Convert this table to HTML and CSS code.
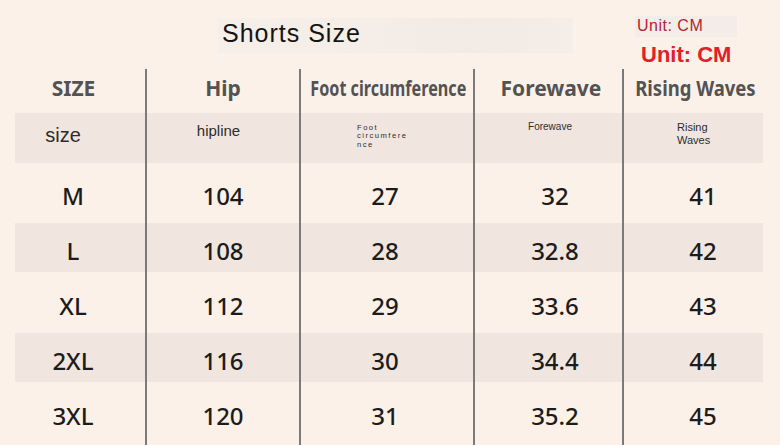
FILE: index.html
```html
<!DOCTYPE html>
<html lang="en">
<head>
<meta charset="utf-8">
<title>Shorts Size</title>
<link rel="stylesheet" href="styles.css">
</head>
<body>
<div class="page">
  <div class="top">
    <div class="title-box"><span class="title">Shorts Size</span></div>
    <div class="units">
      <div class="unit-small">Unit: CM</div>
      <div class="unit-big">Unit: CM</div>
    </div>
  </div>

  <div class="table">
    <div class="row head">
      <div class="cell c1"><span class="h">SIZE</span></div>
      <div class="cell c2"><span class="h">Hip</span></div>
      <div class="cell c3"><span class="h cond">Foot circumference</span></div>
      <div class="cell c4"><span class="h">Forewave</span></div>
      <div class="cell c5"><span class="h cond2">Rising Waves</span></div>
    </div>
    <div class="row sub">
      <div class="cell c1"><span class="s-size">size</span></div>
      <div class="cell c2"><span class="s-hip">hipline</span></div>
      <div class="cell c3"><span class="s-foot">Foot<br>circumfere<br>nce</span></div>
      <div class="cell c4"><span class="s-fore">Forewave</span></div>
      <div class="cell c5"><span class="s-rise">Rising<br>Waves</span></div>
    </div>
    <div class="row data">
      <div class="cell c1">M</div><div class="cell c2">104</div><div class="cell c3">27</div><div class="cell c4">32</div><div class="cell c5">41</div>
    </div>
    <div class="row data shade">
      <div class="cell c1">L</div><div class="cell c2">108</div><div class="cell c3">28</div><div class="cell c4">32.8</div><div class="cell c5">42</div>
    </div>
    <div class="row data">
      <div class="cell c1">XL</div><div class="cell c2">112</div><div class="cell c3">29</div><div class="cell c4">33.6</div><div class="cell c5">43</div>
    </div>
    <div class="row data shade">
      <div class="cell c1">2XL</div><div class="cell c2">116</div><div class="cell c3">30</div><div class="cell c4">34.4</div><div class="cell c5">44</div>
    </div>
    <div class="row data">
      <div class="cell c1">3XL</div><div class="cell c2">120</div><div class="cell c3">31</div><div class="cell c4">35.2</div><div class="cell c5">45</div>
    </div>
    <div class="row filler">
      <div class="cell c1"></div><div class="cell c2"></div><div class="cell c3"></div><div class="cell c4"></div><div class="cell c5"></div>
    </div>
  </div>
</div>
</body>
</html>
```

FILE: styles.css
```css
html, body {
  margin: 0;
  padding: 0;
  overflow: hidden;
  background: #fcf1e8;
}
.page {
  width: 780px;
  height: 445px;
  background: #fcf1e8;
  font-family: "Liberation Sans", Arial, sans-serif;
}
.top {
  height: 58px;
  display: flex;
  align-items: flex-start;
  padding-left: 218px;
}
.title-box {
  margin-top: 18px;
  width: 355px;
  height: 35px;
  box-sizing: border-box;
  padding: 0 0 4px 4px;
  background: linear-gradient(to right, #f6eee8 0%, #f5ede7 45%, #f2eae4 70%, #f5ede7 100%);
}
.title {
  font-size: 25px;
  line-height: 31px;
  letter-spacing: 1px;
  color: #141414;
}
.units {
  margin-left: 62px;
  padding-top: 16px;
  display: flex;
  flex-direction: column;
  align-items: flex-start;
}
.unit-small {
  width: 102px;
  height: 21px;
  box-sizing: border-box;
  padding-left: 2px;
  font-size: 16px;
  line-height: 19px;
  letter-spacing: 0.5px;
  color: #ad262e;
  background: #f3ece8;
}
.unit-big {
  margin-top: 7px;
  margin-left: 6px;
  font-size: 22px;
  line-height: 22px;
  font-weight: bold;
  color: #e0202b;
}
.table {
  margin-left: 15px;
  width: 748px;
}
.row {
  display: grid;
  grid-template-columns: 130px 154px 174px 149px 141px;
}
.cell {
  box-sizing: border-box;
  display: flex;
  justify-content: center;
}
.c2, .c3, .c4, .c5 {
  border-left: 2px solid #7c7a79;
}
/* header */
.head {
  height: 55px;
}
.head .cell {
  margin-top: 11px;
  align-items: center;
  padding-bottom: 7px;
  font-family: "Noto Sans", sans-serif;
  font-weight: bold;
  font-size: 21px;
  color: #535353;
  white-space: nowrap;
}
.head .c1 { padding-right: 13px; }
.head .c3 { padding-left: 2px; }
.head .c4 { padding-left: 5px; }
.head .c5 { padding-left: 3px; }
.cond { display: inline-block; transform: scaleX(0.77); }
.cond2 { display: inline-block; transform: scaleX(0.88); }
/* sub header */
.sub {
  height: 50px;
  background: #f1e6df;
  color: #2c2c2c;
}
.sub .cell { align-items: flex-start; }
.sub .c1 { padding: 12px 34px 0 0; }
.sub .c2 { padding: 10px 9px 0 0; }
.sub .c3 { justify-content: flex-start; padding: 10.5px 0 0 56px; }
.sub .c4 { padding: 9px 0 0 3px; }
.sub .c5 { justify-content: flex-start; padding: 8px 0 0 53px; }
.s-size { font-size: 20px; line-height: 20px; }
.s-hip { font-size: 15px; line-height: 15px; }
.s-foot { font-size: 7.6px; line-height: 8.5px; letter-spacing: 1.5px; }
.s-fore { font-size: 10px; line-height: 10px; }
.s-rise { font-size: 11px; line-height: 13px; }
/* data */
.data {
  height: 55px;
}
.data .cell {
  padding-top: 9px;
  align-items: center;
  font-family: "Noto Sans", sans-serif;
  font-weight: 500;
  font-size: 24px;
  color: #1c1c1c;
}
.shade {
  background: linear-gradient(to bottom, transparent 5px, #f1e6df 5px, #f1e6df 54px, transparent 54px);
}
.data .c1 { padding-right: 14px; }
.data .c3 { padding-right: 4px; }
.data .c4 { padding-left: 13px; }
.data .c5 { padding-left: 19px; }
.filler {
  height: 7px;
}
```
